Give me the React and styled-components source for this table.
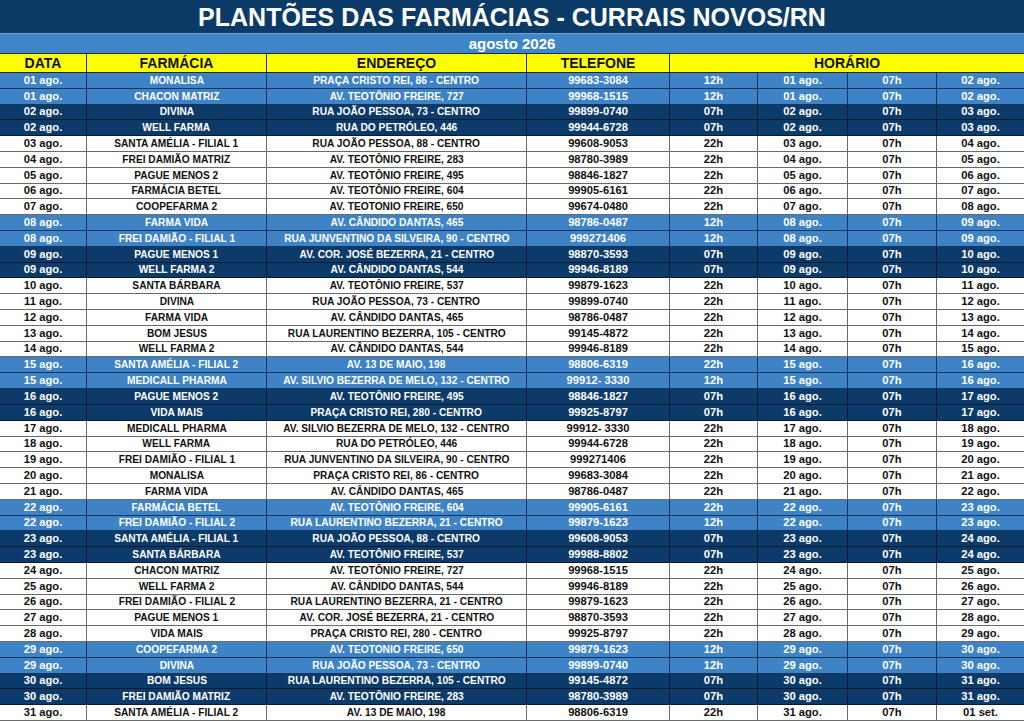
import React from "react";
import styled, { createGlobalStyle } from "styled-components";

const GlobalStyle = createGlobalStyle`
  html, body {
    margin: 0;
    padding: 0;
    background: #ffffff;
  }
  body {
    font-family: "Liberation Sans", Arial, sans-serif;
  }
`;

const COLS = "87px 180px 260px 143px 88px 90px 89px 87px";

const tones = {
  light: { bg: "#3d83c6", fg: "#ffffff", line: "#14365e" },
  dark: { bg: "#0c3a69", fg: "#ffffff", line: "#061a30" },
  white: { bg: "#ffffff", fg: "#111111", line: "#6b6b6b" },
};

// [dia, farmacia, endereco, telefone, hora inicio, tom]
const plantoes = [
  ["01", "MONALISA", "PRAÇA CRISTO REI, 86 - CENTRO", "99683-3084", "12h", "light"],
  ["01", "CHACON MATRIZ", "AV. TEOTÔNIO FREIRE, 727", "99968-1515", "12h", "light"],
  ["02", "DIVINA", "RUA JOÃO PESSOA, 73 - CENTRO", "99899-0740", "07h", "dark"],
  ["02", "WELL FARMA", "RUA DO PETRÓLEO, 446", "99944-6728", "07h", "dark"],
  ["03", "SANTA AMÉLIA - FILIAL 1", "RUA JOÃO PESSOA, 88 - CENTRO", "99608-9053", "22h", "white"],
  ["04", "FREI DAMIÃO MATRIZ", "AV. TEOTÔNIO FREIRE, 283", "98780-3989", "22h", "white"],
  ["05", "PAGUE MENOS 2", "AV. TEOTÔNIO FREIRE, 495", "98846-1827", "22h", "white"],
  ["06", "FARMÁCIA BETEL", "AV. TEOTÔNIO FREIRE, 604", "99905-6161", "22h", "white"],
  ["07", "COOPEFARMA 2", "AV. TEOTONIO FREIRE, 650", "99674-0480", "22h", "white"],
  ["08", "FARMA VIDA", "AV. CÂNDIDO DANTAS, 465", "98786-0487", "12h", "light"],
  ["08", "FREI DAMIÃO - FILIAL 1", "RUA JUNVENTINO DA SILVEIRA, 90 - CENTRO", "999271406", "12h", "light"],
  ["09", "PAGUE MENOS 1", "AV. COR. JOSÉ BEZERRA, 21 - CENTRO", "98870-3593", "07h", "dark"],
  ["09", "WELL FARMA 2", "AV. CÂNDIDO DANTAS, 544", "99946-8189", "07h", "dark"],
  ["10", "SANTA BÁRBARA", "AV. TEOTÔNIO FREIRE, 537", "99879-1623", "22h", "white"],
  ["11", "DIVINA", "RUA JOÃO PESSOA, 73 - CENTRO", "99899-0740", "22h", "white"],
  ["12", "FARMA VIDA", "AV. CÂNDIDO DANTAS, 465", "98786-0487", "22h", "white"],
  ["13", "BOM JESUS", "RUA LAURENTINO BEZERRA, 105 - CENTRO", "99145-4872", "22h", "white"],
  ["14", "WELL FARMA 2", "AV. CÂNDIDO DANTAS, 544", "99946-8189", "22h", "white"],
  ["15", "SANTA AMÉLIA - FILIAL 2", "AV. 13 DE MAIO, 198", "98806-6319", "22h", "light"],
  ["15", "MEDICALL PHARMA", "AV. SILVIO BEZERRA DE MELO, 132 - CENTRO", "99912- 3330", "12h", "light"],
  ["16", "PAGUE MENOS 2", "AV. TEOTÔNIO FREIRE, 495", "98846-1827", "07h", "dark"],
  ["16", "VIDA MAIS", "PRAÇA CRISTO REI, 280 - CENTRO", "99925-8797", "07h", "dark"],
  ["17", "MEDICALL PHARMA", "AV. SILVIO BEZERRA DE MELO, 132 - CENTRO", "99912- 3330", "22h", "white"],
  ["18", "WELL FARMA", "RUA DO PETRÓLEO, 446", "99944-6728", "22h", "white"],
  ["19", "FREI DAMIÃO - FILIAL 1", "RUA JUNVENTINO DA SILVEIRA, 90 - CENTRO", "999271406", "22h", "white"],
  ["20", "MONALISA", "PRAÇA CRISTO REI, 86 - CENTRO", "99683-3084", "22h", "white"],
  ["21", "FARMA VIDA", "AV. CÂNDIDO DANTAS, 465", "98786-0487", "22h", "white"],
  ["22", "FARMÁCIA BETEL", "AV. TEOTÔNIO FREIRE, 604", "99905-6161", "22h", "light"],
  ["22", "FREI DAMIÃO - FILIAL 2", "RUA LAURENTINO BEZERRA, 21 - CENTRO", "99879-1623", "12h", "light"],
  ["23", "SANTA AMÉLIA - FILIAL 1", "RUA JOÃO PESSOA, 88 - CENTRO", "99608-9053", "07h", "dark"],
  ["23", "SANTA BÁRBARA", "AV. TEOTÔNIO FREIRE, 537", "99988-8802", "07h", "dark"],
  ["24", "CHACON MATRIZ", "AV. TEOTÔNIO FREIRE, 727", "99968-1515", "22h", "white"],
  ["25", "WELL FARMA 2", "AV. CÂNDIDO DANTAS, 544", "99946-8189", "22h", "white"],
  ["26", "FREI DAMIÃO - FILIAL 2", "RUA LAURENTINO BEZERRA, 21 - CENTRO", "99879-1623", "22h", "white"],
  ["27", "PAGUE MENOS 1", "AV. COR. JOSÉ BEZERRA, 21 - CENTRO", "98870-3593", "22h", "white"],
  ["28", "VIDA MAIS", "PRAÇA CRISTO REI, 280 - CENTRO", "99925-8797", "22h", "white"],
  ["29", "COOPEFARMA 2", "AV. TEOTONIO FREIRE, 650", "99879-1623", "12h", "light"],
  ["29", "DIVINA", "RUA JOÃO PESSOA, 73 - CENTRO", "99899-0740", "12h", "light"],
  ["30", "BOM JESUS", "RUA LAURENTINO BEZERRA, 105 - CENTRO", "99145-4872", "07h", "dark"],
  ["30", "FREI DAMIÃO MATRIZ", "AV. TEOTÔNIO FREIRE, 283", "98780-3989", "07h", "dark"],
  ["31", "SANTA AMÉLIA - FILIAL 2", "AV. 13 DE MAIO, 198", "98806-6319", "22h", "white"],
];

const nextDay = (d) => {
  const n = parseInt(d, 10) + 1;
  if (n > 31) return "01 set.";
  return String(n).padStart(2, "0") + " ago.";
};

const App = () => {
  return (
    <>
      <GlobalStyle />
      <Page>
        <TitleBar>PLANTÕES DAS FARMÁCIAS - CURRAIS NOVOS/RN</TitleBar>
        <MonthBar>agosto 2026</MonthBar>
        <HeaderRow>
          <HeadCell>DATA</HeadCell>
          <HeadCell>FARMÁCIA</HeadCell>
          <HeadCell>ENDEREÇO</HeadCell>
          <HeadCell>TELEFONE</HeadCell>
          <HeadCell span={4} last>HORÁRIO</HeadCell>
        </HeaderRow>
        <Body>
          {plantoes.map(([dia, nome, end, tel, hora, tone], i) => (
            <Row key={i} tone={tone}>
              <Cell tone={tone}>{dia} ago.</Cell>
              <Cell tone={tone}><Caps>{nome}</Caps></Cell>
              <Cell tone={tone}><Caps>{end}</Caps></Cell>
              <Cell tone={tone}>{tel}</Cell>
              <Cell tone={tone}>{hora}</Cell>
              <Cell tone={tone}>{dia} ago.</Cell>
              <Cell tone={tone}>07h</Cell>
              <Cell tone={tone} last>{nextDay(dia)}</Cell>
            </Row>
          ))}
        </Body>
      </Page>
    </>
  );
};

export default App;

const Page = styled.div`
  width: 1024px;
  height: 721px;
  display: flex;
  flex-direction: column;
  overflow: hidden;
`;

const TitleBar = styled.div`
  height: 33px;
  background-color: #0c3a67;
  color: #ffffff;
  font-size: 25px;
  font-weight: 700;
  display: flex;
  align-items: center;
  justify-content: center;
  padding-top: 1px;
  box-sizing: border-box;
`;

const MonthBar = styled.div`
  height: 20px;
  background-color: #3f86c8;
  border-top: 1px solid #6aa2d6;
  box-sizing: border-box;
  color: #ffffff;
  font-size: 15px;
  font-weight: 700;
  display: flex;
  align-items: center;
  justify-content: center;
`;

const HeaderRow = styled.div`
  height: 20px;
  display: grid;
  grid-template-columns: ${COLS};
  background-color: #ffff00;
  border-top: 1px solid #1b2a40;
  border-bottom: 1px solid #1b2a40;
  box-sizing: border-box;
`;

const HeadCell = styled.div`
  grid-column: span ${({ span }) => span || 1};
  display: flex;
  align-items: center;
  justify-content: center;
  font-size: 14px;
  font-weight: 700;
  color: #111111;
  border-right: ${({ last }) => (last ? "none" : "1px solid #1b2a40")};
`;

const Body = styled.div`
  flex: 1;
  display: grid;
  grid-template-rows: repeat(41, 1fr);
`;

const Row = styled.div`
  display: grid;
  grid-template-columns: ${COLS};
  background-color: ${({ tone }) => tones[tone].bg};
  border-bottom: 1px solid ${({ tone }) => tones[tone].line};
  box-sizing: border-box;
  min-height: 0;
`;

const Cell = styled.div`
  display: flex;
  align-items: center;
  justify-content: center;
  white-space: nowrap;
  overflow: hidden;
  font-size: 11.2px;
  font-weight: 700;
  line-height: 1;
  color: ${({ tone }) => tones[tone].fg};
  border-right: ${({ last, tone }) => (last ? "none" : `1px solid ${tones[tone].line}`)};
`;

// os nomes e endereços aparecem mais estreitos que os números na planilha
const Caps = styled.span`
  display: inline-block;
  transform: scaleX(0.91);
`;
